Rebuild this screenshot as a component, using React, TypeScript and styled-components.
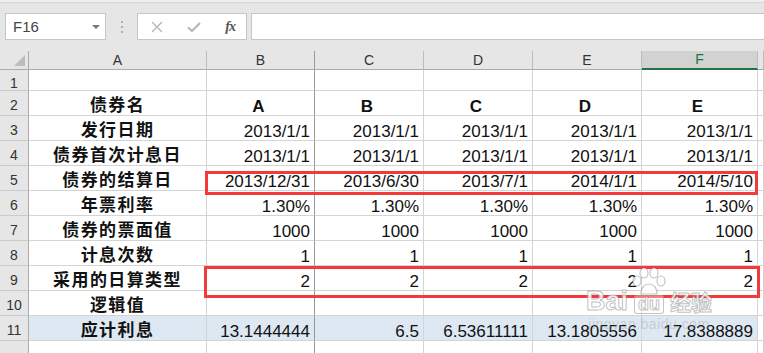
import styled, { createGlobalStyle } from 'styled-components';

const GlobalStyle = createGlobalStyle`
    html, body {
        margin: 0;
        padding: 0;
        background: #fff;
        overflow: hidden;
    }
    body {
        font-family: 'Liberation Sans', Arial, sans-serif;
    }
`;

const columns = ['A', 'B', 'C', 'D', 'E', 'F'];
const activeColumn = 'F';

type SheetRow = {
    label: string;
    cells: string[];
    bold?: boolean;
    band?: boolean;
};

const fill = (v: string) => [v, v, v, v, v];

const sheetRows: SheetRow[] = [
    { label: '', cells: fill('') },
    { label: '债券名', cells: ['A', 'B', 'C', 'D', 'E'], bold: true },
    { label: '发行日期', cells: fill('2013/1/1') },
    { label: '债券首次计息日', cells: fill('2013/1/1') },
    { label: '债券的结算日', cells: ['2013/12/31', '2013/6/30', '2013/7/1', '2014/1/1', '2014/5/10'] },
    { label: '年票利率', cells: fill('1.30%') },
    { label: '债券的票面值', cells: fill('1000') },
    { label: '计息次数', cells: fill('1') },
    { label: '采用的日算类型', cells: fill('2') },
    { label: '逻辑值', cells: fill('') },
    {
        label: '应计利息',
        cells: ['13.1444444', '6.5', '6.53611111', '13.1805556', '17.8388889'],
        band: true,
    },
];

function App() {
    return (
        <Window>
            <GlobalStyle />
            <FormulaBar>
                <NameBox>
                    <span>F16</span>
                    <Caret />
                </NameBox>
                <Grip>
                    <i />
                    <i />
                    <i />
                </Grip>
                <ActionBox>
                    <svg width='12' height='12' viewBox='0 0 12 12'>
                        <path d='M1 1 L11 11 M11 1 L1 11' stroke='#b4b4b4' strokeWidth='1.3' fill='none' />
                    </svg>
                    <svg width='14' height='12' viewBox='0 0 14 12'>
                        <path d='M1 6.5 L5 10 L13 2' stroke='#b4b4b4' strokeWidth='2' fill='none' />
                    </svg>
                    <FxLabel>fx</FxLabel>
                </ActionBox>
                <FormulaInput />
            </FormulaBar>

            <SheetArea>
                <Grid>
                    <Corner>
                        <CornerMark />
                    </Corner>
                    {columns.map((c) => (
                        <ColHead key={c} $active={c === activeColumn} $freeze={c === 'B'}>
                            {c}
                        </ColHead>
                    ))}
                    <ColHead $active={false} $freeze={false} />

                    {sheetRows.map((row, r) => (
                        <Row key={r} row={row} index={r + 1} />
                    ))}
                    {/* row 12 is only a sliver at the bottom edge */}
                    <RowHead $first={false} />
                    <LabelCell $band={false} />
                    {fill('').map((_, i) => (
                        <Cell key={i} $band={false} $bold={false} $freeze={i === 0} />
                    ))}
                    <Cell $band={false} $bold={false} $freeze={false} />
                </Grid>

                <Highlight style={{ left: 205, top: 120, width: 553, height: 24 }} />
                <Highlight style={{ left: 204, top: 215, width: 556, height: 32 }} />

                <Watermark>
                    <WatermarkLine>
                        <WmText>Bai</WmText>
                        <PawStack>
                            <svg width='38' height='28' viewBox='0 0 38 28'>
                                <g fill='rgba(255,255,255,0.85)' stroke='rgba(140,140,140,0.5)' strokeWidth='1.2'>
                                    <ellipse cx='7' cy='14' rx='4' ry='5' />
                                    <ellipse cx='14' cy='6' rx='4' ry='5' />
                                    <ellipse cx='24' cy='6' rx='4' ry='5' />
                                    <ellipse cx='31' cy='14' rx='4' ry='5' />
                                    <path d='M11 27 C11 20 15 17 19 17 C23 17 27 20 27 27 Z' />
                                </g>
                            </svg>
                            <WmBox>du</WmBox>
                        </PawStack>
                        <WmText $cjk>经验</WmText>
                    </WatermarkLine>
                    <WmUrl>jingyan.baidu.com</WmUrl>
                </Watermark>
            </SheetArea>
        </Window>
    );
}

function Row({ row, index }: { row: SheetRow; index: number }) {
    return (
        <>
            <RowHead $first={index === 1}>{index}</RowHead>
            <LabelCell $band={!!row.band}>{row.label}</LabelCell>
            {row.cells.map((v, i) => (
                <Cell key={i} $band={!!row.band} $bold={!!row.bold} $freeze={i === 0}>
                    {v}
                </Cell>
            ))}
            <Cell $band={false} $bold={false} $freeze={false} />
        </>
    );
}

export default App;

const Window = styled.div`
    width: 764px;
    height: 353px;
    overflow: hidden;
    background: #fff;
`;

const FormulaBar = styled.div`
    height: 51px;
    box-sizing: border-box;
    display: flex;
    align-items: flex-start;
    padding: 13px 0 0 5px;
    background: linear-gradient(#efefef 0 2px, #d6d6d6 2px 3px, #e6e6e6 3px);
`;

const NameBox = styled.div`
    width: 101px;
    height: 27px;
    box-sizing: border-box;
    display: flex;
    align-items: center;
    justify-content: space-between;
    padding: 0 5px 0 7px;
    background: #fff;
    border: 1px solid #c6c6c6;
    font-size: 15px;
    color: #444;
`;

const Caret = styled.i`
    width: 0;
    height: 0;
    border-left: 4px solid transparent;
    border-right: 4px solid transparent;
    border-top: 4px solid #777;
`;

const Grip = styled.div`
    width: 31px;
    height: 27px;
    display: flex;
    flex-direction: column;
    align-items: center;
    justify-content: center;
    gap: 3px;

    i {
        width: 2px;
        height: 2px;
        background: #b0b0b0;
    }
`;

const ActionBox = styled.div`
    width: 110px;
    height: 27px;
    box-sizing: border-box;
    display: flex;
    align-items: center;
    justify-content: space-between;
    padding: 0 11px 0 13px;
    background: #fff;
    border: 1px solid #c6c6c6;
`;

const FxLabel = styled.span`
    font-family: 'Liberation Serif', 'Times New Roman', serif;
    font-style: italic;
    font-weight: 700;
    font-size: 14px;
    color: #555;
    letter-spacing: -1px;
`;

const FormulaInput = styled.div`
    flex: 1;
    height: 27px;
    margin-left: 4px;
    box-sizing: border-box;
    background: #fff;
    border: 1px solid #c6c6c6;
    border-right: none;
`;

const SheetArea = styled.div`
    position: relative;
`;

const Grid = styled.div`
    display: grid;
    grid-template-columns: 29px 178px 108px 109px 109px 109px 116px 1fr;
    grid-template-rows: 19px 21px repeat(11, 25px);
`;

const Corner = styled.div`
    position: relative;
    background: #e6e6e6;
    border-right: 1px solid #ababab;
    border-bottom: 1px solid #ababab;
`;

const CornerMark = styled.i`
    position: absolute;
    right: 3px;
    bottom: 3px;
    width: 0;
    height: 0;
    border-left: 11px solid transparent;
    border-bottom: 11px solid #bdbdbd;
`;

const ColHead = styled.div<{ $active: boolean; $freeze: boolean }>`
    box-sizing: border-box;
    display: flex;
    align-items: flex-end;
    justify-content: center;
    padding-bottom: 1px;
    font-size: 14px;
    line-height: 16px;
    color: ${(p) => (p.$active ? '#217346' : '#333')};
    background: ${(p) => (p.$active ? '#d2d2d2' : '#e6e6e6')};
    border-right: 1px solid ${(p) => (p.$freeze ? '#9a9a9a' : '#bdbdbd')};
    border-bottom: ${(p) => (p.$active ? '2px solid #217346' : '1px solid #ababab')};
`;

const RowHead = styled.div<{ $first: boolean }>`
    box-sizing: border-box;
    display: flex;
    align-items: flex-end;
    justify-content: center;
    padding-bottom: ${(p) => (p.$first ? '0' : '3px')};
    font-size: 14px;
    line-height: 14px;
    color: #333;
    background: #e6e6e6;
    border-right: 1px solid #ababab;
    border-bottom: 1px solid #cacaca;
`;

const LabelCell = styled.div<{ $band: boolean }>`
    box-sizing: border-box;
    display: flex;
    align-items: flex-end;
    justify-content: center;
    padding-bottom: 3px;
    font-family: 'Noto Sans CJK SC', 'Liberation Sans', sans-serif;
    font-weight: 700;
    font-size: 17px;
    line-height: 17px;
    letter-spacing: 1.4px;
    color: #111;
    background: ${(p) => (p.$band ? '#dde8f3' : '#fff')};
    border-right: 1px solid #d4d4d4;
    border-bottom: 1px solid #d4d4d4;
    white-space: nowrap;
`;

const Cell = styled.div<{ $band: boolean; $bold: boolean; $freeze: boolean }>`
    box-sizing: border-box;
    display: flex;
    align-items: flex-end;
    justify-content: ${(p) => (p.$bold ? 'center' : 'flex-end')};
    padding: 0 4px 1px 0;
    font-size: 17px;
    font-weight: ${(p) => (p.$bold ? 700 : 400)};
    line-height: 15px;
    color: #111;
    background: ${(p) => (p.$band ? '#dde8f3' : '#fff')};
    border-right: 1px solid ${(p) => (p.$freeze ? '#999' : '#d4d4d4')};
    border-bottom: 1px solid #d4d4d4;
    white-space: nowrap;
    overflow: hidden;
`;

const Highlight = styled.div`
    position: absolute;
    box-sizing: border-box;
    border: 3px solid #f2393c;
`;

const Watermark = styled.div`
    position: absolute;
    left: 586px;
    top: 216px;
    display: flex;
    flex-direction: column;
    align-items: center;
    pointer-events: none;
`;

const WatermarkLine = styled.div`
    display: flex;
    align-items: flex-end;
`;

const WmText = styled.span<{ $cjk?: boolean }>`
    font-family: ${(p) => (p.$cjk ? "'Noto Sans CJK SC', sans-serif" : "'Liberation Sans', sans-serif")};
    font-weight: 700;
    font-size: ${(p) => (p.$cjk ? '21px' : '27px')};
    line-height: 22px;
    color: rgba(255, 255, 255, 0.85);
    -webkit-text-stroke: 1px rgba(130, 130, 130, 0.5);
    margin-bottom: 2px;
`;

const PawStack = styled.div`
    display: flex;
    flex-direction: column;
    align-items: center;
    margin: 0 2px;
`;

const WmBox = styled.span`
    font-weight: 700;
    font-size: 18px;
    line-height: 17px;
    padding: 0 3px;
    color: rgba(255, 255, 255, 0.85);
    -webkit-text-stroke: 1px rgba(130, 130, 130, 0.5);
    border: 1px solid rgba(140, 140, 140, 0.5);
    border-radius: 3px;
    background: rgba(255, 255, 255, 0.35);
`;

const WmUrl = styled.span`
    margin-top: 2px;
    font-size: 14px;
    letter-spacing: 0.5px;
    color: rgba(150, 150, 150, 0.35);
`;
